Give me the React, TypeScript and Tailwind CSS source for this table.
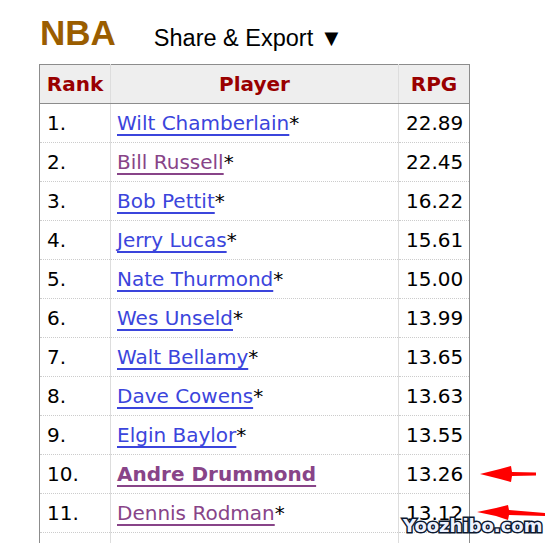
import React from "react";

type Row = {
  rank: string;
  name: string;
  rpg: string;
  visited?: boolean;
  hof?: boolean;
  active?: boolean;
};

const rows: Row[] = [
  { rank: "1.", name: "Wilt Chamberlain", rpg: "22.89", hof: true },
  { rank: "2.", name: "Bill Russell", rpg: "22.45", hof: true, visited: true },
  { rank: "3.", name: "Bob Pettit", rpg: "16.22", hof: true },
  { rank: "4.", name: "Jerry Lucas", rpg: "15.61", hof: true },
  { rank: "5.", name: "Nate Thurmond", rpg: "15.00", hof: true },
  { rank: "6.", name: "Wes Unseld", rpg: "13.99", hof: true },
  { rank: "7.", name: "Walt Bellamy", rpg: "13.65", hof: true },
  { rank: "8.", name: "Dave Cowens", rpg: "13.63", hof: true },
  { rank: "9.", name: "Elgin Baylor", rpg: "13.55", hof: true },
  { rank: "10.", name: "Andre Drummond", rpg: "13.26", visited: true, active: true },
  { rank: "11.", name: "Dennis Rodman", rpg: "13.12", hof: true, visited: true },
];

function Arrows() {
  return (
    <svg className="pointer-events-none absolute left-0 top-0" width="547" height="543">
      <path d="M480 474 L500 469 L511 466 L512 472 L536 472.5 L536 475.5 L512 476 L511 482 L500 479 Z" fill="#ff0000" />
      <path d="M477 512 L496 508 L508 505 L509 510 L545 513 L545 516 L509 515 L508 520 L496 516 Z" fill="#ff0000" />
    </svg>
  );
}

export default function App() {
  return (
    <div className="relative h-[543px] w-[547px] overflow-hidden bg-white font-['DejaVu_Sans',Verdana,sans-serif]">
      <div className="flex h-[64px] items-start pl-[40px] font-['Liberation_Sans',Arial,sans-serif]">
        <h1 className="mt-[15px] text-[35px] font-bold leading-[35px] text-[#9a5d00]">NBA</h1>
        <div className="ml-[38px] mt-[27px] text-[23.5px] leading-[23px] text-black">Share &amp; Export ▼</div>
      </div>

      <table className="ml-[39px] w-[430px] table-fixed border-collapse border border-[#8c8c8c] text-[20px] text-black">
        <colgroup>
          <col className="w-[71px]" />
          <col className="w-[288px]" />
          <col className="w-[71px]" />
        </colgroup>
        <thead>
          <tr className="bg-[#eeeeee] text-[#990000]">
            <th className="h-[39px] border-b border-r border-b-[#8c8c8c] border-r-[#dddddd] text-center font-bold">Rank</th>
            <th className="h-[39px] border-b border-r border-b-[#8c8c8c] border-r-[#dddddd] text-center font-bold">Player</th>
            <th className="h-[39px] border-b border-b-[#8c8c8c] text-center font-bold">RPG</th>
          </tr>
        </thead>
        <tbody>
          {rows.map((r) => (
            <tr key={r.rank} className="border-b border-dotted border-[#cccccc]">
              <td className="h-[39px] border-r border-solid border-r-[#dddddd] px-[7px]">{r.rank}</td>
              <td className="h-[39px] border-r border-solid border-r-[#dddddd] px-[6px]">
                <a
                  href="#"
                  className={
                    "underline decoration-2 underline-offset-[4px] " +
                    (r.visited ? "text-[#884488] " : "text-[#3b45dc] ") +
                    (r.active ? "font-bold" : "")
                  }
                >
                  {r.name}
                </a>
                {r.hof ? "*" : ""}
              </td>
              <td className="h-[39px] px-[7px] text-right">{r.rpg}</td>
            </tr>
          ))}
          <tr>
            <td className="h-[39px] border-r border-solid border-r-[#dddddd]">&nbsp;</td>
            <td className="h-[39px] border-r border-solid border-r-[#dddddd]">&nbsp;</td>
            <td className="h-[39px]">&nbsp;</td>
          </tr>
        </tbody>
      </table>

      <Arrows />

      <div className="absolute left-[403px] top-[513px] font-['DejaVu_Sans',Verdana,sans-serif] text-[18px] font-bold leading-[26px] text-[#eef2ff] [-webkit-text-stroke:3px_#0b1830] [paint-order:stroke_fill]">
        Yoozhibo.com
      </div>
    </div>
  );
}
